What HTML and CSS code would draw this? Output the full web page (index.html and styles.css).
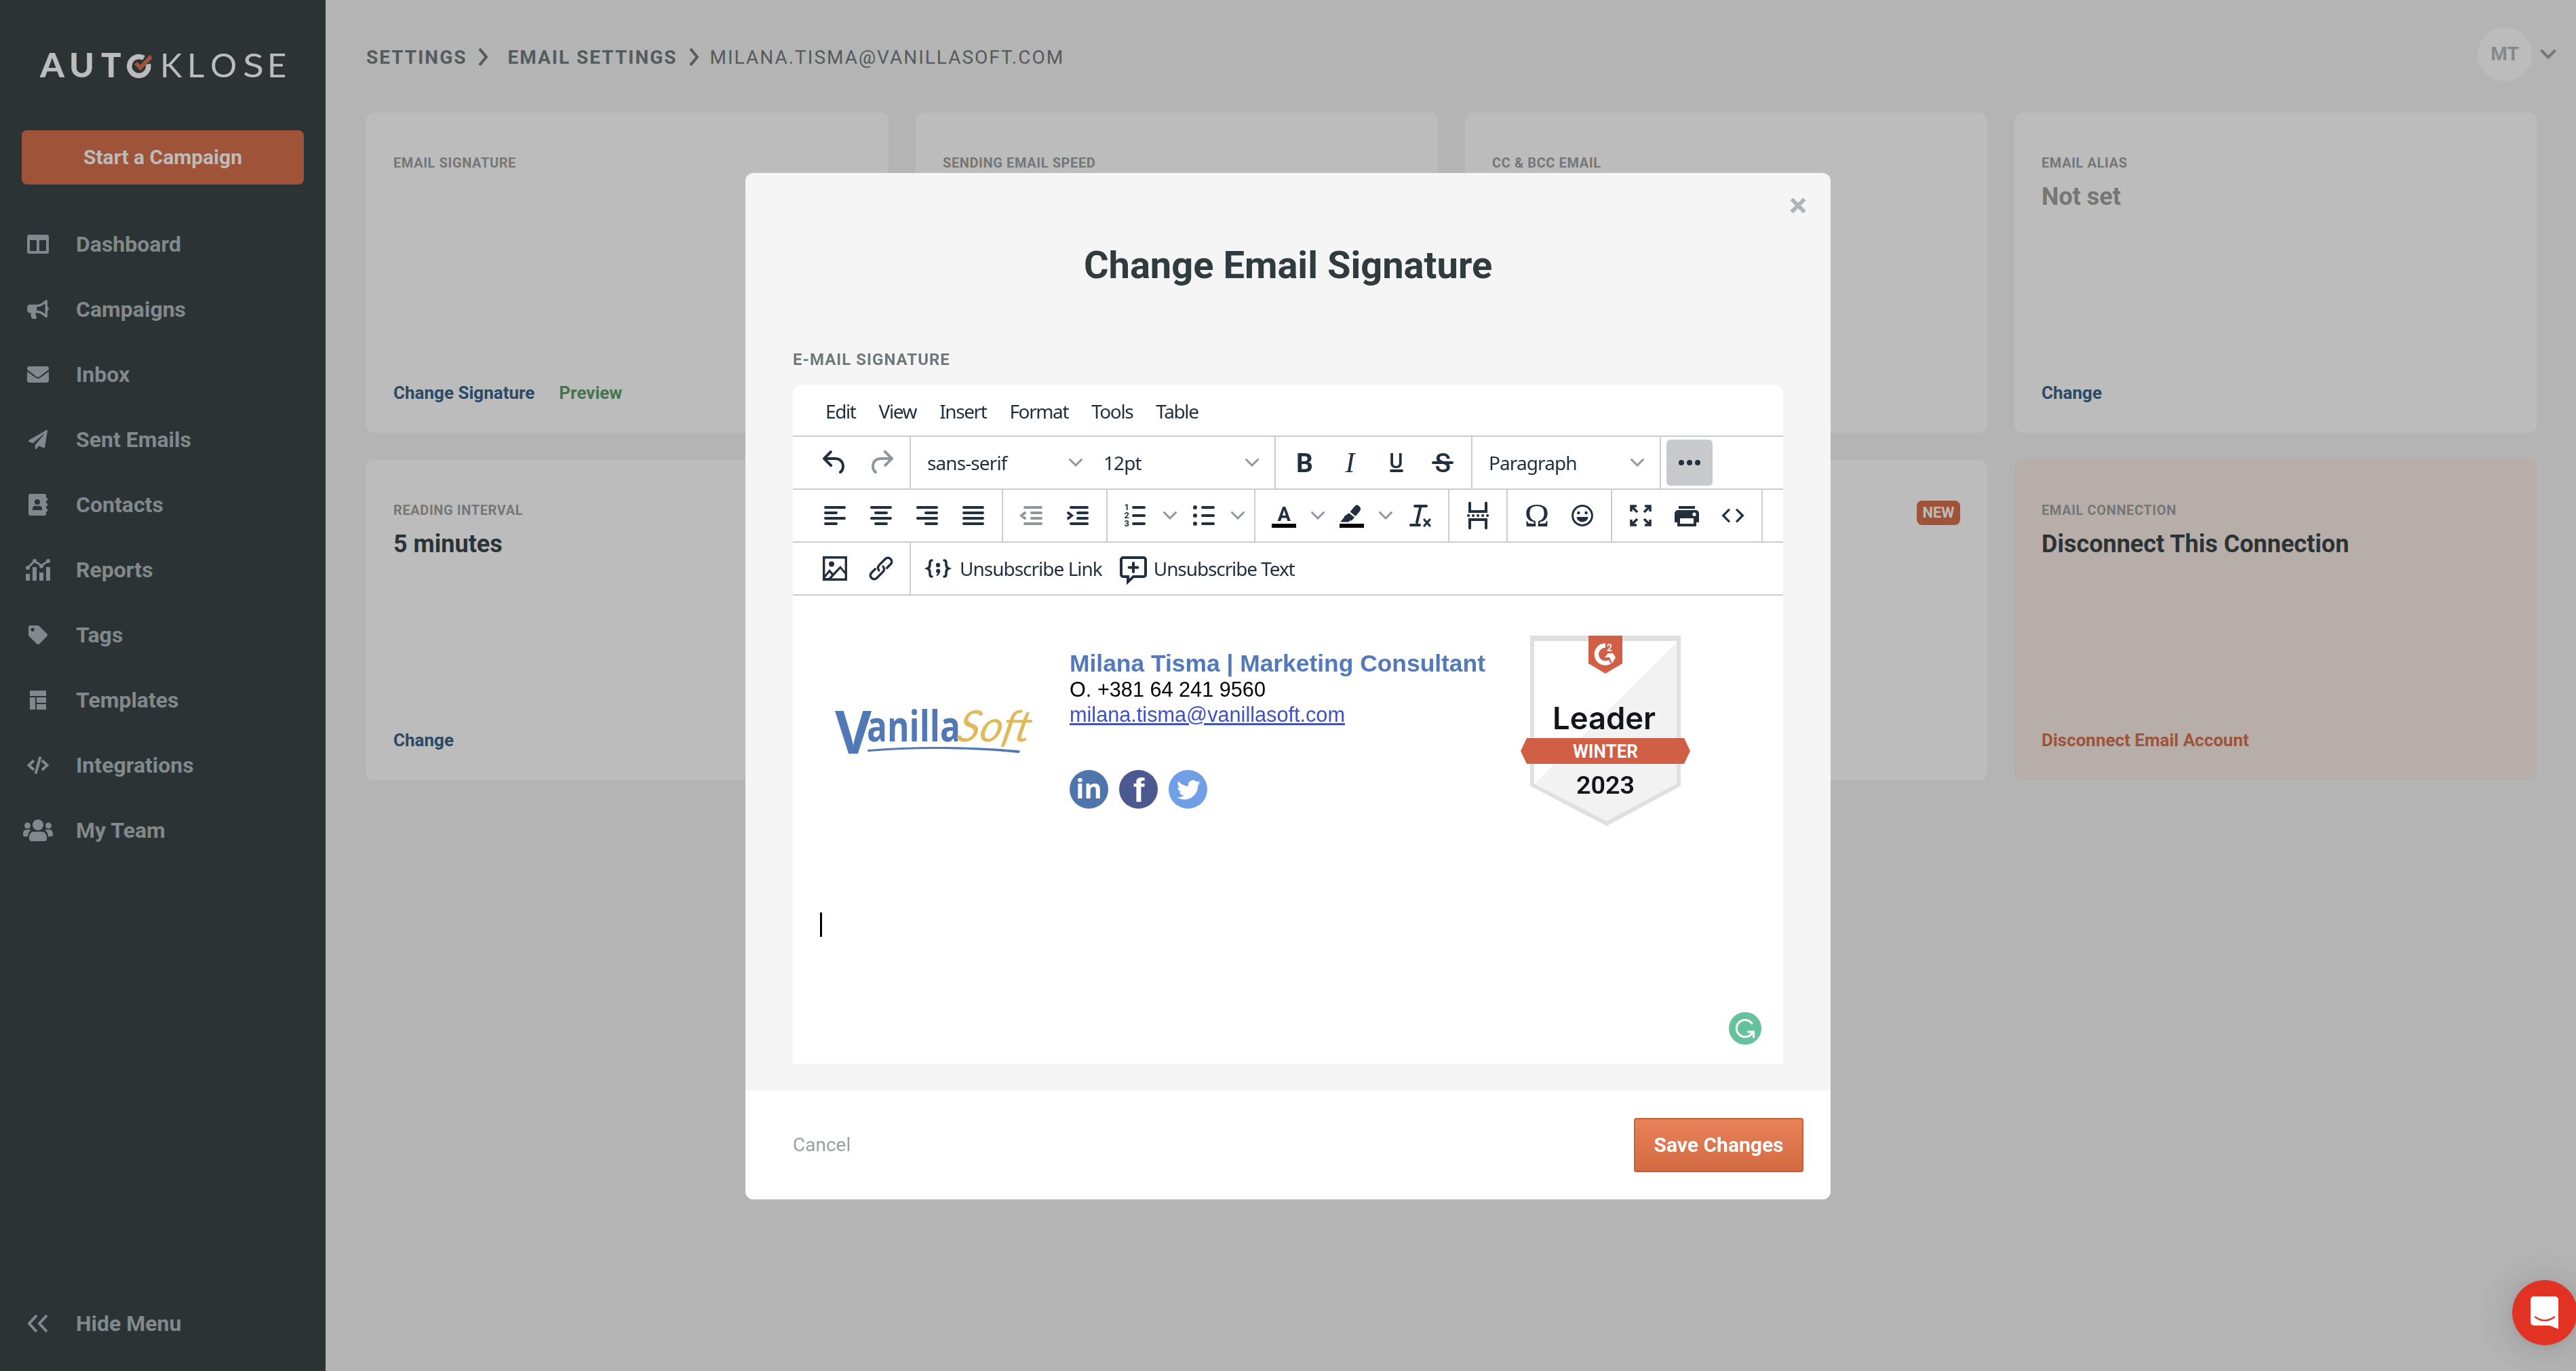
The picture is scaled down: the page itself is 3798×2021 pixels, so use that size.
FILE: index.html
```
<!DOCTYPE html>
<html lang="en-US">
<head>
	<meta charset="utf-8">
	<meta name="viewport" content="width=device-width, initial-scale=1.0">
	<title>Autoklose - Email Settings</title>
	<link rel="stylesheet" href="styles.css">
</head>
<body>
	<div class="app">
		<aside class="sidebar">
			<svg class="logo" width="370" height="64" viewBox="0 -8 370 64">
				<g fill="#bcbcbc">
					<text class="logo-bold" x="5" y="42" textLength="36" lengthAdjust="spacingAndGlyphs">A</text>
					<text class="logo-bold" x="48" y="42" textLength="37" lengthAdjust="spacingAndGlyphs">U</text>
					<text class="logo-bold" x="95" y="42">T</text>
					<text class="logo-thin" x="182" y="42">K</text>
					<text class="logo-thin" x="222" y="42">L</text>
					<text class="logo-thin" x="256" y="42">O</text>
					<text class="logo-thin" x="304" y="42" textLength="31" lengthAdjust="spacingAndGlyphs">S</text>
					<text class="logo-thin" x="340" y="42">E</text>
				</g>
				<path d="M158 13.500a14 14 0 1 0 6.500 9" fill="none" stroke="#bcbcbc" stroke-width="7.500"/>
				<path d="M146 21l7 7 16-17" fill="none" stroke="#9f5338" stroke-width="6"/>
			</svg>
			<a class="btn-start">Start a Campaign</a>
			<nav class="nav">
				<a class="nav-item">
					<svg width="48" height="36" viewBox="0 0 48 36"><path fill-rule="evenodd" d="M11 4h26a3 3 0 0 1 3 3v22a3 3 0 0 1-3 3H11a3 3 0 0 1-3-3V7a3 3 0 0 1 3-3zm1 8v16h10V12zm14 0v16h10V12z"/></svg>
					Dashboard
				</a>
				<a class="nav-item">
					<svg width="48" height="28" viewBox="-144 0 864 512"><path d="M576 240c0-23.630-12.950-44.040-32-55.120V32.010C544 23.260 537.020 0 512 0c-7.120 0-14.190 2.380-19.980 7.020l-85.030 68.030C364.280 109.190 310.660 128 256 128H64c-35.350 0-64 28.650-64 64v96c0 35.350 28.650 64 64 64h33.700c-1.390 10.480-2.180 21.140-2.180 32 0 39.770 9.260 77.350 25.560 110.940 5.190 10.690 16.520 17.060 28.400 17.060h74.280c26.050 0 41.690-29.840 25.900-50.560-16.400-21.520-26.150-48.360-26.150-77.440 0-11.110 1.620-21.790 4.410-32H256c54.660 0 108.280 18.810 150.980 52.950l85.030 68.030a32.023 32.023 0 0 0 19.980 7.020c24.920 0 32-22.780 32-32V295.130C563.050 284.040 576 263.630 576 240zm-96 141.420l-33.050-26.440C392.950 311.780 325.120 288 256 288v-96c69.120 0 136.950-23.780 190.950-66.980L480 98.580v282.840z"/></svg>
					Campaigns
				</a>
				<a class="nav-item">
					<svg width="48" height="32" viewBox="-128 0 768 512"><path d="M502.300 190.800c3.900-3.100 9.700-.2 9.700 4.700V400c0 26.500-21.500 48-48 48H48c-26.500 0-48-21.500-48-48V195.600c0-5 5.700-7.800 9.700-4.700 22.400 17.400 52.100 39.500 154.100 113.600 21.100 15.400 56.700 47.800 92.200 47.600 35.700.3 72-32.800 92.300-47.600 102-74.100 131.600-96.300 154-113.700zM256 320c23.200.4 56.600-29.200 73.400-41.400 132.700-96.300 142.800-104.700 173.400-128.700 5.800-4.500 9.200-11.500 9.200-18.900v-19c0-26.500-21.500-48-48-48H48c-26.500 0-48 21.500-48 48v19c0 7.400 3.400 14.300 9.200 18.900 30.600 23.900 40.700 32.400 173.400 128.700 16.800 12.200 50.200 41.800 73.400 41.400z"/></svg>
					Inbox
				</a>
				<a class="nav-item">
					<svg width="48" height="28" viewBox="-183 0 878 512"><path d="M476 3.200L12.500 270.600c-18.100 10.400-15.800 35.600 2.200 43.200L121 358.400l287.300-253.200c5.500-4.900 13.300 2.600 8.600 8.300L176 407v80.500c0 23.600 28.500 32.900 42.500 15.800L282 426l124.600 52.200c14.200 6 30.400-2.900 33-18.200l72-432C515 7.800 493.300-6.800 476 3.200z"/></svg>
					Sent Emails
				</a>
				<a class="nav-item">
					<svg width="48" height="36" viewBox="0 0 48 36"><path fill-rule="evenodd" d="M13 2h20a3 3 0 0 1 3 3v3h2v4h-2v4h2v4h-2v4h2v4h-2v3a3 3 0 0 1-3 3H13a3 3 0 0 1-3-3V5a3 3 0 0 1 3-3zm10 8a4 4 0 1 0 0 8 4 4 0 0 0 0-8zm-7 16h14v-2c0-3-2-4.500-4.500-4.500-1.500 1-3.500 1-5 0-2.500 0-4.500 1.500-4.500 4.500z"/></svg>
					Contacts
				</a>
				<a class="nav-item">
					<svg width="48" height="36" viewBox="0 0 48 36"><path d="M6 24h6v10H6zM16 14h6v20h-6zM26 22h6v12h-6zM36 14h6v20h-6z"/><path d="M9 15L19 5l10 7L39 5" fill="none" stroke="#82898c" stroke-width="3"/><circle cx="9" cy="15" r="3"/><circle cx="19" cy="5" r="3"/><circle cx="29" cy="12.500" r="3"/><circle cx="39" cy="5" r="3"/></svg>
					Reports
				</a>
				<a class="nav-item">
					<svg width="48" height="28" viewBox="-183 0 878 512"><path d="M0 252.118V48C0 21.490 21.490 0 48 0h204.118a48 48 0 0 1 33.941 14.059l211.882 211.882c18.745 18.745 18.745 49.137 0 67.882L293.823 497.941c-18.745 18.745-49.137 18.745-67.882 0L14.059 286.059A48 48 0 0 1 0 252.118zM112 64c-26.510 0-48 21.490-48 48s21.490 48 48 48 48-21.490 48-48-21.490-48-48-48z"/></svg>
					Tags
				</a>
				<a class="nav-item">
					<svg width="48" height="36" viewBox="0 0 48 36"><path d="M12 4h24v8H12zM12 14h8v18h-8zM22 14h14v8H22zM22 24h14v8H22z"/></svg>
					Templates
				</a>
				<a class="nav-item">
					<svg width="48" height="36" viewBox="0 0 48 36"><path d="M18 11l-7.500 7 7.500 7M30 11l7.500 7-7.500 7M27.500 5.500l-7 25" fill="none" stroke="#82898c" stroke-width="4"/></svg>
					Integrations
				</a>
				<a class="nav-item">
					<svg width="48" height="36" viewBox="0 0 48 36"><circle cx="24" cy="10" r="8"/><circle cx="8.500" cy="11" r="4.500"/><circle cx="39.500" cy="11" r="4.500"/><path d="M11 30c0-7 3-10 8-10h10c5 0 8 3 8 10 0 2-1 4-3 4H14c-2 0-3-2-3-4zM2 24c0-5 1.500-7 5-7h4c1 0 2 .5 2.500 1-3 2-4 4.500-4.500 9H4c-1 0-2-1-2-3zM46 24c0-5-1.500-7-5-7h-4c-1 0-2 .5-2.500 1 3 2 4 4.500 4.500 9h5c1 0 2-1 2-3z"/></svg>
					My Team
				</a>
			</nav>
			<a class="nav-item hide-menu">
				<svg width="48" height="36" viewBox="0 0 48 36"><path d="M22 6L11 18l11 12M37 6L26 18l11 12" fill="none" stroke="#82898c" stroke-width="4"/></svg>
				Hide Menu
			</a>
		</aside>

		<main class="main">
			<header class="header">
				<div class="breadcrumb">
					<b>Settings</b>
					<svg width="16" height="26" viewBox="0 0 16 26"><path d="M2 1l10 12L2 25"/></svg>
					<b class="crumb-2">Email Settings</b>
					<svg width="16" height="26" viewBox="0 0 16 26"><path d="M2 1l10 12L2 25"/></svg>
					<span>milana.tisma@vanillasoft.com</span>
				</div>
				<div class="user">
					<span class="avatar">MT</span>
					<svg width="26" height="18" viewBox="0 0 26 18"><path d="M2.500 3L13 13.500 23.500 3" fill="none" stroke="#767676" stroke-width="4"/></svg>
				</div>
			</header>

			<section class="cards">
				<div class="card">
					<h4>Email Signature</h4>
					<div class="card-links"><a>Change Signature</a><a class="green">Preview</a></div>
				</div>
				<div class="card">
					<h4>Sending Email Speed</h4>
				</div>
				<div class="card">
					<h4>CC &amp; BCC Email</h4>
				</div>
				<div class="card">
					<h4>Email Alias</h4>
					<p class="muted">Not set</p>
					<div class="card-links"><a>Change</a></div>
				</div>
				<div class="card">
					<h4>Reading Interval</h4>
					<p>5 minutes</p>
					<div class="card-links"><a>Change</a></div>
				</div>
				<div class="card"></div>
				<div class="card">
					<span class="badge-new">NEW</span>
				</div>
				<div class="card card-danger">
					<h4>Email Connection</h4>
					<p>Disconnect This Connection</p>
					<div class="card-links"><a class="red">Disconnect Email Account</a></div>
				</div>
			</section>
		</main>
	</div>

	<div class="overlay">
		<div class="modal">
			<svg class="close" width="24" height="24" viewBox="0 0 24 24"><path d="M2.500 2.500l19 19M21.500 2.500l-19 19" stroke="#adb5b9" stroke-width="6"/></svg>
			<div class="modal-body">
				<h2>Change Email Signature</h2>
				<label>E-mail Signature</label>

				<div class="editor">
					<div class="menubar">
						<span>Edit</span><span>View</span><span>Insert</span><span>Format</span><span>Tools</span><span>Table</span>
					</div>

					<div class="toolbar">
						<div class="group">
							<i class="tb"><svg viewBox="0 0 24 24"><path d="M6.400 8H12c3.700 0 6.200 2 6.800 5.100.6 2.700-.4 5.600-2.300 6.800a1 1 0 0 1-1-1.800c1.100-.6 1.800-2.700 1.400-4.600-.5-2.100-2.100-3.500-4.900-3.500H6.400l3.300 3.300a1 1 0 1 1-1.400 1.400l-5-5a1 1 0 0 1 0-1.400l5-5a1 1 0 0 1 1.400 1.400L6.400 8Z"/></svg></i>
							<i class="tb disabled"><svg viewBox="0 0 24 24"><path d="M17.600 10H12c-2.800 0-4.400 1.400-4.900 3.500-.4 2 .3 4 1.400 4.600a1 1 0 1 1-1 1.800c-2-1.200-2.900-4.100-2.300-6.800.6-3 3-5.100 6.800-5.100h5.600l-3.300-3.300a1 1 0 1 1 1.400-1.400l5 5a1 1 0 0 1 0 1.400l-5 5a1 1 0 0 1-1.400-1.400l3.300-3.300Z"/></svg></i>
						</div>
						<div class="group">
							<span class="select">sans-serif <svg class="chev" viewBox="0 0 20 12"><path d="M1.500 1.500L10 10l8.500-8.500"/></svg></span>
							<span class="select">12pt <svg class="chev" viewBox="0 0 20 12"><path d="M1.500 1.500L10 10l8.500-8.500"/></svg></span>
						</div>
						<div class="group">
							<i class="tb"><svg viewBox="0 0 24 24"><text class="ic-b" x="6" y="19">B</text></svg></i>
							<i class="tb"><svg viewBox="0 0 24 24"><text class="ic-i" x="8.200" y="19">I</text></svg></i>
							<i class="tb"><svg viewBox="0 0 24 24"><text class="ic-u" x="6.600" y="15.800">U</text><rect x="7" y="17" width="10" height="2" rx="1"/></svg></i>
							<i class="tb"><svg viewBox="0 0 24 24"><text class="ic-s" x="6.200" y="19">S</text><rect x="4" y="11" width="16" height="2" rx="1"/></svg></i>
						</div>
						<div class="group">
							<span class="select">Paragraph <svg class="chev" viewBox="0 0 20 12"><path d="M1.500 1.500L10 10l8.500-8.500"/></svg></span>
						</div>
						<div class="group last">
							<i class="tb active"><svg viewBox="0 0 24 24"><circle cx="6" cy="12" r="2"/><circle cx="12" cy="12" r="2"/><circle cx="18" cy="12" r="2"/></svg></i>
						</div>
					</div>

					<div class="toolbar">
						<div class="group">
							<i class="tb line"><svg viewBox="0 0 24 24"><path d="M5 6h14M5 10h8M5 14h14M5 18h8"/></svg></i>
							<i class="tb line"><svg viewBox="0 0 24 24"><path d="M5 6h14M8 10h8M5 14h14M8 18h8"/></svg></i>
							<i class="tb line"><svg viewBox="0 0 24 24"><path d="M5 6h14M11 10h8M5 14h14M11 18h8"/></svg></i>
							<i class="tb line"><svg viewBox="0 0 24 24"><path d="M5 6h14M5 10h14M5 14h14M5 18h14"/></svg></i>
						</div>
						<div class="group">
							<i class="tb line disabled"><svg viewBox="0 0 24 24"><path d="M7 6h12M12 10h7M12 14h7M7 18h12M7 10l-2.500 2L7 14"/></svg></i>
							<i class="tb line"><svg viewBox="0 0 24 24"><path d="M7 6h12M12 10h7M12 14h7M7 18h12M5 10l2.500 2L5 14"/></svg></i>
						</div>
						<div class="group">
							<i class="tb line"><svg viewBox="0 0 24 24"><path d="M10 6h8M10 12h8M10 18h8"/><text class="ic-n" x="3.200" y="8.200">1</text><text class="ic-n" x="3.200" y="14.200">2</text><text class="ic-n" x="3.200" y="20.200">3</text></svg></i>
							<i class="arrow"><svg class="chev" viewBox="0 0 20 12"><path d="M1.500 1.500L10 10l8.500-8.500"/></svg></i>
							<i class="tb line"><svg viewBox="0 0 24 24"><path d="M11 6h8M11 12h8M11 18h8"/><circle cx="5.500" cy="6" r="1.500"/><circle cx="5.500" cy="12" r="1.500"/><circle cx="5.500" cy="18" r="1.500"/></svg></i>
							<i class="arrow"><svg class="chev" viewBox="0 0 20 12"><path d="M1.500 1.500L10 10l8.500-8.500"/></svg></i>
						</div>
						<div class="group">
							<i class="tb"><svg viewBox="0 0 24 24"><text class="ic-a" x="7.200" y="16">A</text><rect class="swatch" x="3" y="18" width="18" height="3"/></svg></i>
							<i class="arrow"><svg class="chev" viewBox="0 0 20 12"><path d="M1.500 1.500L10 10l8.500-8.500"/></svg></i>
							<i class="tb"><svg viewBox="0 0 24 24"><path d="M10.800 9.200l2.800-3.400c1-1.200 1.800-1.900 2.600-1.600 1.200.4 2.300 1.600 2.300 2.800 0 .8-.3 1.500-1 2.300L14.800 12.500zM10 10.100l4 3.200-1.900 2.300-1.400.1-1 1.100H3.500l2.800-3.300.2-1z"/><rect class="swatch" x="3" y="18" width="18" height="3"/></svg></i>
							<i class="arrow"><svg class="chev" viewBox="0 0 20 12"><path d="M1.500 1.500L10 10l8.500-8.500"/></svg></i>
							<i class="tb line"><svg viewBox="0 0 24 24"><path d="M8.500 5H17M12.800 5L10 17M5.500 19h6.500"/><path class="fine" d="M15.500 15l4 4.500M19.500 15l-4 4.500"/></svg></i>
						</div>
						<div class="group">
							<i class="tb"><svg viewBox="0 0 24 24"><path d="M5 2.800a.9.900 0 0 1 2 0V8h10V2.800a.9.900 0 0 1 2 0V10H5zM5 14h14v7.200a.9.900 0 0 1-2 0V16H7v5.200a.9.900 0 0 1-2 0z"/><path d="M5 12h15" fill="none" stroke="#222f3e" stroke-width="2" stroke-linecap="round" stroke-dasharray=".1 3.400"/></svg></i>
						</div>
						<div class="group">
							<i class="tb"><svg viewBox="0 0 24 24"><text class="ic-o" x="12" y="20" text-anchor="middle">Ω</text></svg></i>
							<i class="tb"><svg viewBox="0 0 24 24"><circle cx="12" cy="12" r="7.200" fill="none" stroke="#222f3e" stroke-width="1.500"/><circle cx="9.200" cy="10" r="1.100"/><circle cx="14.800" cy="10" r="1.100"/><path d="M7.800 13h8.400c0 2.200-1.900 3.700-4.200 3.700S7.800 15.200 7.800 13z"/></svg></i>
						</div>
						<div class="group">
							<i class="tb line"><svg viewBox="0 0 24 24"><path class="full" d="M5 9V5h4M5.500 5.500l4 4M19 9V5h-4M18.500 5.500l-4 4M5 15v4h4M5.500 18.500l4-4M19 15v4h-4M18.500 18.500l-4-4"/></svg></i>
							<i class="tb"><svg viewBox="0 0 24 24"><path fill-rule="evenodd" d="M6 5h12v2H6zM5.500 8h13A2.500 2.500 0 0 1 21 10.500V17h-2v3H5v-3H3v-6.500A2.500 2.500 0 0 1 5.500 8zM7 14v4h10v-4zm10.500-4.200a1.300 1.300 0 1 0 0 2.600 1.300 1.300 0 0 0 0-2.600z"/></svg></i>
							<i class="tb line"><svg viewBox="0 0 24 24"><path class="code" d="M9 7.800L4.800 12 9 16.200M15 7.800l4.200 4.200-4.200 4.200"/></svg></i>
						</div>
					</div>

					<div class="toolbar">
						<div class="group">
							<i class="tb"><svg viewBox="0 0 24 24"><path fill-rule="evenodd" d="M3 3h18v18H3zm1.700 1.700v11.900L8 12.500l2.600 3L16 10l3.300 4V4.700zM16 12.300l-6.500 6.900h9.800v-3zM8 15l-3.300 4H7.500l2-2.200z"/><circle cx="9.500" cy="8.700" r="2"/></svg></i>
							<i class="tb line"><svg viewBox="0 0 24 24"><path class="link" d="M10.500 13.500c-1.200-1.500-.9-3 .3-4.200l4.300-4.300c1.200-1.200 2.700-1.200 3.900 0s1.200 2.700 0 3.900l-2.700 2.700M13.500 10.500c1.200 1.500.9 3-.3 4.200l-4.300 4.300c-1.200 1.200-2.700 1.200-3.900 0s-1.200-2.700 0-3.900l2.700-2.700"/></svg></i>
						</div>
						<div class="group last">
							<span class="tb-text"><svg viewBox="0 0 24 24"><path d="M7.500 6C5.800 6 6 7.500 6 9s-.2 2.400-1.700 3c1.500.6 1.700 1.500 1.700 3s-.2 3 1.500 3M16.500 6c1.700 0 1.500 1.500 1.500 3s.2 2.400 1.700 3c-1.500.6-1.700 1.500-1.700 3s.2 3-1.500 3" fill="none" stroke="#222f3e" stroke-width="1.800" stroke-linecap="round"/><circle cx="12" cy="9.500" r="1.600"/><path d="M10.500 14a1.600 1.600 0 1 1 3.100.4c-.3 1.500-1.300 2.700-2.400 3.200l-.5-.8c.6-.4 1-.9 1-1.500-.7-.1-1.200-.6-1.200-1.300z"/></svg>Unsubscribe Link</span>
							<span class="tb-text second"><svg viewBox="0 0 24 24"><path d="M4.500 4h15A1.500 1.500 0 0 1 21 5.500v11a1.500 1.500 0 0 1-1.500 1.500H12l-4 3.800V18H4.500A1.500 1.500 0 0 1 3 16.500v-11A1.500 1.500 0 0 1 4.500 4zM12 8v6.500M8.800 11.200h6.400" fill="none" stroke="#222f3e" stroke-width="2" stroke-linecap="round"/></svg>Unsubscribe Text</span>
						</div>
					</div>

					<div class="content">
						<div class="signature">
							<svg class="vs-logo" width="304" height="120" viewBox="0 -20 304 120">
								<text class="vs-v" x="2" y="71" textLength="54" lengthAdjust="spacingAndGlyphs">V</text>
								<text class="vs-a" x="49" y="53" textLength="138" lengthAdjust="spacingAndGlyphs">anilla</text>
								<text class="vs-s" transform="translate(180 53) skewX(-12)" textLength="108" lengthAdjust="spacingAndGlyphs">Soft</text>
								<path d="M51 65c70-6 150-5 222 1 3 1 2 4-1 4-72-7-150-8-220-2-2 0-3-2-1-3z" fill="#5179b8"/>
							</svg>
							<div class="sig-text">
								<div class="sig-name">Milana Tisma | Marketing Consultant</div>
								<div>O. +381 64 241 9560</div>
								<div><a>milana.tisma@vanillasoft.com</a></div>
								<div class="social">
									<svg width="57" height="57" viewBox="0 0 57 57"><circle cx="28.500" cy="28.500" r="28.500" fill="#4f76ac"/><text x="28.500" y="41.500" text-anchor="middle" class="soc-in">in</text></svg>
									<svg width="57" height="57" viewBox="0 0 57 57"><circle cx="28.500" cy="28.500" r="28.500" fill="#4c5890"/><text x="29" y="47" text-anchor="middle" class="soc-f">f</text></svg>
									<svg width="57" height="57" viewBox="0 0 57 57"><circle cx="28.500" cy="28.500" r="28.500" fill="#6f9fe6"/><path transform="translate(12 12) scale(1.450)" fill="#fff" d="M23.953 4.570a10 10 0 01-2.825.775 4.958 4.958 0 002.163-2.723c-.951.555-2.005.959-3.127 1.184a4.920 4.920 0 00-8.384 4.482C7.690 8.095 4.067 6.130 1.640 3.162a4.822 4.822 0 00-.666 2.475c0 1.710.87 3.213 2.188 4.096a4.904 4.904 0 01-2.228-.616v.06a4.923 4.923 0 003.946 4.827 4.996 4.996 0 01-2.212.085 4.936 4.936 0 004.604 3.417 9.867 9.867 0 01-6.102 2.105c-.39 0-.779-.023-1.170-.067a13.995 13.995 0 007.557 2.209c9.053 0 13.998-7.496 13.998-13.985 0-.21 0-.42-.015-.63A9.935 9.935 0 0024 4.590z"/></svg>
								</div>
							</div>
							<svg class="g2" width="250" height="284" viewBox="0 0 250 284">
								<path d="M17 5h216v217l-106 56L17 222z" fill="#fff"/>
								<path d="M231 10v211l-104 54-106-56z" fill="#f2f2f2"/>
								<path d="M17 4h216v217l-106 57L17 221z" fill="none" stroke="#dfe1df" stroke-width="6"/>
								<path d="M14 5h222" stroke="#dfe1df" stroke-width="8"/>
								<path d="M100 1h50v41l-25 15-25-15z" fill="#d05f45"/>
								<path d="M125 15.500a13 13 0 1 0 6.500 24.200" fill="none" stroke="#fff" stroke-width="6.500"/>
								<path d="M124 33l5-6h7l4 6-5 9-4-9z" fill="#fff"/>
								<text x="127" y="24" class="g2-small">2</text>
								<text x="47" y="139" class="g2-leader" textLength="152" lengthAdjust="spacingAndGlyphs">Leader</text>
								<path d="M0 171l9-19h232l9 19-9 19H9z" fill="#d05f45"/>
								<text x="77" y="181" class="g2-winter" textLength="96" lengthAdjust="spacingAndGlyphs">WINTER</text>
								<text x="82" y="234" class="g2-year" textLength="86" lengthAdjust="spacingAndGlyphs">2023</text>
							</svg>
						</div>
						<div class="caret"></div>
						<svg class="grammarly" width="48" height="48" viewBox="0 0 48 48"><circle cx="24" cy="24" r="24" fill="#66c29e"/><path d="M34.500 17.500a12.500 12.500 0 1 0 0 13M27.500 29h9v9" fill="none" stroke="#fff" stroke-width="3"/></svg>
					</div>
				</div>
			</div>
			<div class="modal-footer">
				<a class="cancel">Cancel</a>
				<a class="btn-save">Save Changes</a>
			</div>
		</div>
	</div>

	<div class="chat">
		<svg width="96" height="96" viewBox="0 0 96 96"><path d="M32 24h31a5 5 0 0 1 5 5v43l-13-5H32a5 5 0 0 1-5-5V29a5 5 0 0 1 5-5z" fill="#fff"/><path d="M34 54.500q14 10 28 0" fill="none" stroke="#e13223" stroke-width="2.500" stroke-linecap="round"/></svg>
	</div>
</body>
</html>
```
FILE: styles.css
```
* {
	box-sizing: border-box;
}
body {
	margin: 0;
	font-family: Roboto, sans-serif;
	background: #b4b4b4;
	overflow: hidden;
}
h2, h4, p {
	margin: 0;
}
svg {
	display: block;
	flex: none;
}
.app {
	display: flex;
	height: 2021px;
}

/* sidebar */
.sidebar {
	display: flex;
	flex-direction: column;
	width: 480px;
	padding: 64px 32px 22px;
	background: #2c3335;
}
.logo {
	margin-left: 22px;
}
.logo-bold, .logo-thin {
	font-family: Lato, sans-serif;
	font-size: 49px;
}
.logo-bold {
	font-weight: 900;
}
.logo-thin {
	font-weight: 400;
}
.btn-start {
	height: 80px;
	margin-top: 64px;
	border-radius: 8px;
	background: #9f5338;
	color: #bcbcbc;
	font-size: 30px;
	font-weight: 700;
	line-height: 79px;
	text-align: center;
}
.nav {
	margin-top: 40px;
}
.nav-item {
	display: flex;
	align-items: center;
	gap: 32px;
	height: 96px;
	color: #82898c;
	font-size: 32px;
	font-weight: 700;
}
.nav-item svg {
	fill: #82898c;
}
.hide-menu {
	margin-top: auto;
}

/* header */
.main {
	flex: 1;
	padding: 0 58px 0 60px;
}
.header {
	display: flex;
	justify-content: space-between;
	height: 166px;
	padding-top: 40px;
}
.breadcrumb {
	display: flex;
	align-items: center;
	height: 88px;
	color: #545b5d;
	font-size: 28px;
	letter-spacing: 2px;
	text-transform: uppercase;
}
.breadcrumb b {
	margin-right: 17px;
	font-weight: 700;
}
.breadcrumb .crumb-2 {
	margin-left: 27px;
}
.breadcrumb span {
	margin-left: 15px;
}
.breadcrumb path {
	fill: none;
	stroke: #545b5d;
	stroke-width: 4;
}
.user {
	display: flex;
	align-items: center;
	gap: 11px;
	height: 80px;
	margin-right: -30px;
}
.avatar {
	width: 80px;
	height: 80px;
	border-radius: 50%;
	background: #bcbcbc;
	color: #82898c;
	font-size: 28px;
	font-weight: 700;
	line-height: 80px;
	text-align: center;
}

/* cards */
.cards {
	display: grid;
	grid-template-columns: repeat(4, 770px);
	grid-auto-rows: 472px;
	gap: 40px;
}
.card {
	display: flex;
	flex-direction: column;
	padding: 62px 40px 43px;
	border-radius: 12px;
	background: #bcbcbc;
}
.card h4 {
	color: #767676;
	font-size: 20px;
	font-weight: 700;
	line-height: 24px;
	letter-spacing: .6px;
	text-transform: uppercase;
}
.card p {
	margin-top: 16px;
	color: #2c3335;
	font-size: 36px;
	font-weight: 700;
	line-height: 44px;
}
.card p.muted {
	color: #767676;
}
.card-links {
	display: flex;
	gap: 36px;
	margin-top: auto;
	color: #2a4a68;
	font-size: 26px;
	font-weight: 700;
	line-height: 32px;
}
.card-links .green {
	color: #44754f;
}
.card-links .red {
	color: #9f5338;
}
.card-danger {
	background: #b8aea9;
}
.badge-new {
	align-self: flex-end;
	width: 64px;
	height: 36px;
	margin-top: -2px;
	border-radius: 8px;
	background: #9f5338;
	color: #bcbcbc;
	font-size: 22px;
	font-weight: 700;
	line-height: 35px;
	text-align: center;
}

/* modal */
.overlay {
	position: fixed;
	inset: 0;
	display: flex;
	justify-content: center;
	align-items: flex-start;
	padding-top: 255px;
}
.modal {
	position: relative;
	width: 1600px;
	border-radius: 12px;
	background: #f5f5f5;
	overflow: hidden;
}
.close {
	position: absolute;
	top: 36px;
	right: 36px;
}
.modal-body {
	padding: 104px 70px 40px;
}
.modal-body h2 {
	color: #2f3b3e;
	font-size: 56px;
	font-weight: 700;
	line-height: 64px;
	text-align: center;
}
.modal-body label {
	display: block;
	margin: 92px 0 23px;
	color: #6f787b;
	font-size: 24px;
	font-weight: 700;
	line-height: 30px;
	letter-spacing: 1px;
	text-transform: uppercase;
}
.modal-footer {
	display: flex;
	justify-content: space-between;
	align-items: center;
	height: 160px;
	padding: 0 40px 0 70px;
	background: #fff;
}
.cancel {
	padding-bottom: 2px;
	color: #999fa2;
	font-size: 28px;
}
.btn-save {
	width: 250px;
	height: 80px;
	border: 2px solid #c5603c;
	border-radius: 4px;
	background: linear-gradient(#e88259, #d36a43);
	color: #fff;
	font-size: 30px;
	font-weight: 700;
	line-height: 75px;
	text-align: center;
}

/* editor */
.editor {
	height: 1000px;
	border-radius: 12px 12px 0 0;
	background: #fff;
	color: #222f3e;
	font-family: "Noto Sans", sans-serif;
	font-size: 28px;
	letter-spacing: -.9px;
}
.menubar {
	display: flex;
	gap: 34px;
	height: 76px;
	padding-left: 48px;
	border-bottom: 2px solid #ccc;
	letter-spacing: -1.4px;
	line-height: 77px;
}
.toolbar {
	display: flex;
	height: 78px;
	padding-left: 20px;
	border-bottom: 2px solid #ccc;
}
.group {
	display: flex;
	align-items: center;
	padding: 0 8px;
	border-right: 2px solid #ccc;
}
.group.last {
	border-right: 0;
}
.tb, .arrow {
	display: flex;
	justify-content: center;
	align-items: center;
	width: 68px;
	height: 68px;
	border-radius: 6px;
	font-style: normal;
}
.arrow {
	width: 32px;
}
.tb svg, .tb-text svg {
	width: 48px;
	height: 48px;
	fill: #222f3e;
}
.tb.active {
	background: #c8c9cd;
}
.tb.disabled {
	opacity: .5;
}
.line path {
	fill: none;
	stroke: #222f3e;
	stroke-width: 2;
	stroke-linecap: round;
}
.line .fine, .line .code {
	stroke-width: 1.6;
}
.line .link {
	stroke-width: 1.7;
}
.line .full {
	stroke-width: 1.8;
	stroke-linecap: butt;
}
.tb .swatch {
	fill: #000;
}
.chev {
	width: 20px;
	height: 12px;
	fill: none;
	stroke: #92979e;
	stroke-width: 3;
	stroke-linecap: round;
}
.select {
	display: flex;
	justify-content: space-between;
	align-items: center;
	width: 260px;
	height: 68px;
	padding: 0 15px 0 16px;
	line-height: 70px;
}
.tb-text {
	display: flex;
	align-items: center;
	gap: 8px;
	padding-left: 8px;
	letter-spacing: -1px;
	line-height: 70px;
}
.tb-text.second {
	gap: 6px;
	margin-left: 14px;
	letter-spacing: -1.1px;
}
.ic-b, .ic-u, .ic-s, .ic-a {
	font-family: Roboto, sans-serif;
	font-size: 19.5px;
	font-weight: 700;
	letter-spacing: 0;
}
.ic-i {
	font: italic 21px "Liberation Serif", serif;
}
.ic-u {
	font-size: 15.5px;
	font-weight: 500;
}
.ic-s {
	font-weight: 500;
}
.ic-a {
	font-size: 14.5px;
}
.ic-n {
	font: bold 6.5px Roboto, sans-serif;
}
.ic-o {
	font: 24.5px "Liberation Serif", serif;
}
.content {
	position: relative;
	height: 690px;
	padding-left: 40px;
}
.signature {
	display: flex;
	align-items: flex-start;
	height: 467px;
}
.vs-logo {
	margin: 142px 44px 0 20px;
}
.vs-v, .vs-a {
	font: bold 88px "Open Sans", sans-serif;
	fill: #5179b8;
	letter-spacing: 0;
}
.vs-a {
	font-size: 62px;
}
.vs-s {
	font: italic 64px Lato, sans-serif;
	fill: #e0b95b;
	letter-spacing: 0;
}
.sig-text {
	width: 665px;
	padding-top: 80px;
	color: #000;
	font: 30.67px/37px "Liberation Sans", Arial, sans-serif;
	letter-spacing: 0;
}
.sig-name {
	color: #5279bb;
	font-size: 35.4px;
	font-weight: bold;
	line-height: 40px;
	white-space: nowrap;
}
.sig-text a {
	color: #4051c4;
	text-decoration: underline;
}
.social {
	display: flex;
	gap: 16px;
	margin-top: 63px;
}
.soc-in {
	font: bold 40px "Open Sans", sans-serif;
	fill: #fff;
}
.soc-f {
	font: bold 50px "Liberation Sans", Arial, sans-serif;
	fill: #fff;
}
.g2 {
	margin-top: 58px;
}
.g2 text {
	letter-spacing: 0;
}
.g2-small {
	font: bold 14px Roboto, sans-serif;
	fill: #fff;
}
.g2-leader {
	font: 600 45px Inter, sans-serif;
	fill: #14151a;
}
.g2-winter {
	font: bold 27px Roboto, sans-serif;
	fill: #fff;
}
.g2-year {
	font: 600 37px Roboto, sans-serif;
	fill: #14151a;
}
.caret {
	width: 3px;
	height: 36px;
	background: #000;
}
.grammarly {
	position: absolute;
	right: 32px;
	bottom: 28px;
}

/* chat launcher */
.chat {
	position: fixed;
	right: -2px;
	bottom: 38px;
	width: 96px;
	height: 96px;
	border-radius: 50%;
	background: #e13223;
	box-shadow: 0 2px 12px rgba(0,0,0,.08), 0 4px 60px rgba(0,0,0,.16);
}
```
